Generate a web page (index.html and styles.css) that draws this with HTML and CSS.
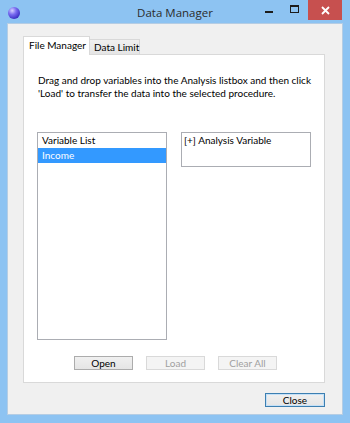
FILE: index.html
```html
<!DOCTYPE html>
<html lang="en">
<head>
    <meta charset="UTF-8">
    <meta name="viewport" content="width=device-width, initial-scale=1.0">
    <title>Data Manager</title>
    <link rel="stylesheet" href="styles.css">
</head>
<body>
<div class="window">
    <div class="titlebar">
        <div class="titlebar-left">
            <span class="app-icon"></span>
        </div>
        <div class="title">Data Manager</div>
        <div class="caption-buttons">
            <span class="caption-btn minimize"><span class="min-bar"></span></span>
            <span class="caption-btn maximize"><span class="max-box"></span></span>
            <span class="caption-btn close">
                <svg width="9" height="9" viewBox="0 0 9 9">
                    <path d="M1 1 L8 8 M8 1 L1 8" stroke="#fff" stroke-width="1.8"/>
                </svg>
            </span>
        </div>
    </div>

    <div class="client">
        <div class="tabs">
            <div class="tab active">File Manager</div>
            <div class="tab">Data Limit</div>
        </div>

        <div class="panel">
            <p class="hint">Drag and drop variables into the Analysis listbox and then click<br/>'Load' to transfer the data into the selected procedure.</p>

            <div class="lists">
                <div class="listbox variable-list">
                    <div class="list-head">Variable List</div>
                    <div class="list-item selected">Income</div>
                </div>
                <div class="listbox analysis-list">
                    <div class="list-head">[+] Analysis Variable</div>
                </div>
            </div>

            <div class="actions">
                <button type="button" class="btn">Open</button>
                <button type="button" class="btn" disabled>Load</button>
                <button type="button" class="btn" disabled>Clear All</button>
            </div>
        </div>

        <div class="footer">
            <button type="button" class="btn btn-default">Close</button>
        </div>
    </div>
</div>
</body>
</html>
```

FILE: styles.css
```css
body {
    font-family: Lato, "Open Sans", Arial, sans-serif;
    font-size: 10px;
    margin: 0;
    padding: 0;
}

.window {
    width: 350px;
    height: 423px;
    background-color: #8dc3f2;
    box-sizing: border-box;
    display: flex;
    flex-direction: column;
}

/* title bar */

.titlebar {
    height: 23px;
    display: grid;
    grid-template-columns: 1fr auto 1fr;
    align-items: start;
}

.titlebar-left {
    padding: 7px 0 0 8px;
}

.app-icon {
    display: block;
    width: 12px;
    height: 12px;
    border-radius: 50%;
    background: radial-gradient(circle at 35% 30%, #d7d2ff 0%, #7a6cf0 35%, #3b2fc4 75%, #2a1f8f 100%);
}

.title {
    font-family: "Open Sans", Arial, sans-serif;
    font-size: 11.5px;
    color: #2b2b2b;
    padding-top: 5px;
}

.caption-buttons {
    display: flex;
    justify-content: flex-end;
    padding-right: 8px;
}

.caption-btn {
    height: 20px;
    display: flex;
    align-items: center;
    justify-content: center;
}

.minimize {
    width: 24px;
}

.min-bar {
    width: 8px;
    height: 2px;
    margin-top: 3px;
    background-color: #1c1c1c;
}

.maximize {
    width: 27px;
}

.max-box {
    width: 7px;
    height: 5px;
    border: 1px solid #1c1c1c;
    border-top-width: 2px;
    margin-top: -2px;
}

.close {
    width: 34px;
    background-color: #c7504f;
}

/* client area */

.client {
    flex: 1;
    margin: 0 7px 8px 7px;
    background-color: #f0f0f0;
    border: 1px solid #b5cde4;
    padding: 12px 17px 0 15px;
    display: flex;
    flex-direction: column;
}

.tabs {
    display: flex;
    align-items: flex-end;
    height: 18px;
    position: relative;
    z-index: 1;
}

.tab {
    height: 15px;
    line-height: 14px;
    padding: 0 4px;
    box-sizing: border-box;
    border: 1px solid #d9d9d9;
    border-bottom: none;
    background: linear-gradient(#f0f0f0, #e5e5e5);
    color: #000;
    white-space: nowrap;
}

.tab.active {
    height: 19px;
    line-height: 16px;
    width: 67px;
    padding: 0 5px;
    background: #fff;
    margin-bottom: -1px;
}

.tab:not(.active) {
    width: 50px;
    border-left: none;
}

.panel {
    height: 329px;
    box-sizing: border-box;
    background-color: #fff;
    border: 1px solid #d9d9d9;
    padding: 19px 12px 0 14px;
    display: flex;
    flex-direction: column;
}

.hint {
    margin: 0;
    line-height: 13px;
    color: #000;
    white-space: nowrap;
}

.lists {
    display: flex;
    align-items: flex-start;
    gap: 14px;
    margin-top: 32px;
    margin-left: -1px;
}

.listbox {
    width: 130px;
    box-sizing: border-box;
    border: 1px solid #abadb3;
    background-color: #fff;
}

.variable-list {
    height: 208px;
}

.analysis-list {
    height: 35px;
}

.list-head,
.list-item {
    height: 15px;
    line-height: 15px;
    padding: 0 4px;
    color: #000;
    white-space: nowrap;
}

.analysis-list .list-head {
    padding: 0 2px;
}

.list-item.selected {
    background-color: #3399ff;
    color: #fff;
}

.actions {
    display: flex;
    gap: 13px;
    margin-top: 16px;
    padding-left: 36px;
}

/* buttons */

.btn {
    font-family: inherit;
    font-size: 10px;
    width: 59px;
    height: 14px;
    padding: 0;
    line-height: 12px;
    border: 1px solid #acacac;
    background: linear-gradient(#f0f0f0, #e5e5e5);
    color: #000;
}

.btn:disabled {
    border-color: #d9d9d9;
    background: #f4f4f4;
    color: #a0a0a0;
}

.footer {
    display: flex;
    justify-content: flex-end;
    padding-top: 10px;
}

.btn-default {
    width: 60px;
    border-color: #3c7fb1;
    box-shadow: inset 0 0 0 1px #c4e0f7;
}
```
